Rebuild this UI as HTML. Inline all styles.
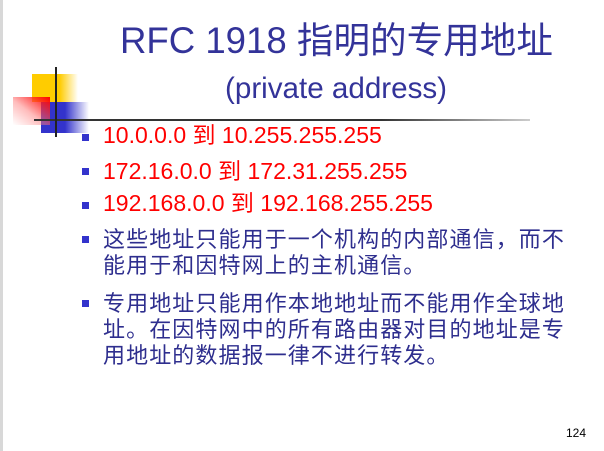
<!DOCTYPE html>
<html><head><meta charset="utf-8"><style>
html,body{margin:0;padding:0}
body{width:604px;height:451px;position:relative;background:#fff;overflow:hidden;font-family:"Liberation Sans","Noto Sans CJK SC",sans-serif}
.l{position:absolute;white-space:nowrap;line-height:1}
.t{color:#333399}
.r{color:#ff0000;font-size:23px}
.b{color:#2e2e8e;font-size:22px;letter-spacing:1.1px}
.sq{position:absolute;width:7px;height:7px;background:#3333cc;left:82px}
</style></head><body>
<div style="position:absolute;left:0;top:0;width:3px;height:451px;background:#d8d8d8"></div>
<div style="position:absolute;left:32px;top:74px;width:46px;height:28px;background:linear-gradient(to right,#ffcc00 60%,rgba(255,204,0,0))"></div>
<div style="position:absolute;left:41px;top:102px;width:48px;height:31px;background:linear-gradient(to right,#3333cc 50%,rgba(51,51,204,0))"></div>
<div style="position:absolute;left:13px;top:97px;width:37px;height:28px;background:linear-gradient(to bottom left,#ff0000,rgba(255,120,120,0.5) 55%,rgba(255,255,255,0))"></div>
<div style="position:absolute;left:34px;top:119px;width:496px;height:2px;background:linear-gradient(to right,#333 70%,#ccc)"></div>
<div style="position:absolute;left:55px;top:67px;width:2px;height:70px;background:#222"></div>
<div class="l t" style="left:120px;top:23px;font-size:36.6px">RFC 1918 指明的专用地址</div>
<div class="l t" style="left:225px;top:74px;font-size:29.6px">(private address)</div>
<div class="sq" style="top:134px"></div>
<div class="l r" style="left:103px;top:124px">10.0.0.0 到 10.255.255.255</div>
<div class="sq" style="top:168px"></div>
<div class="l r" style="left:103px;top:160px">172.16.0.0 到 172.31.255.255</div>
<div class="sq" style="top:202px"></div>
<div class="l r" style="left:103px;top:192px">192.168.0.0 到 192.168.255.255</div>
<div class="sq" style="top:236px"></div>
<div class="l b" style="left:103px;top:229px">这些地址只能用于一个机构的内部通信，而不</div>
<div class="l b" style="left:103px;top:255px">能用于和因特网上的主机通信。</div>
<div class="sq" style="top:300px"></div>
<div class="l b" style="left:103px;top:293px">专用地址只能用作本地地址而不能用作全球地</div>
<div class="l b" style="left:103px;top:319px">址。在因特网中的所有路由器对目的地址是专</div>
<div class="l b" style="left:103px;top:345px">用地址的数据报一律不进行转发。</div>
<div class="l" style="left:566px;top:427px;font-size:12px;color:#000">124</div>
</body></html>
